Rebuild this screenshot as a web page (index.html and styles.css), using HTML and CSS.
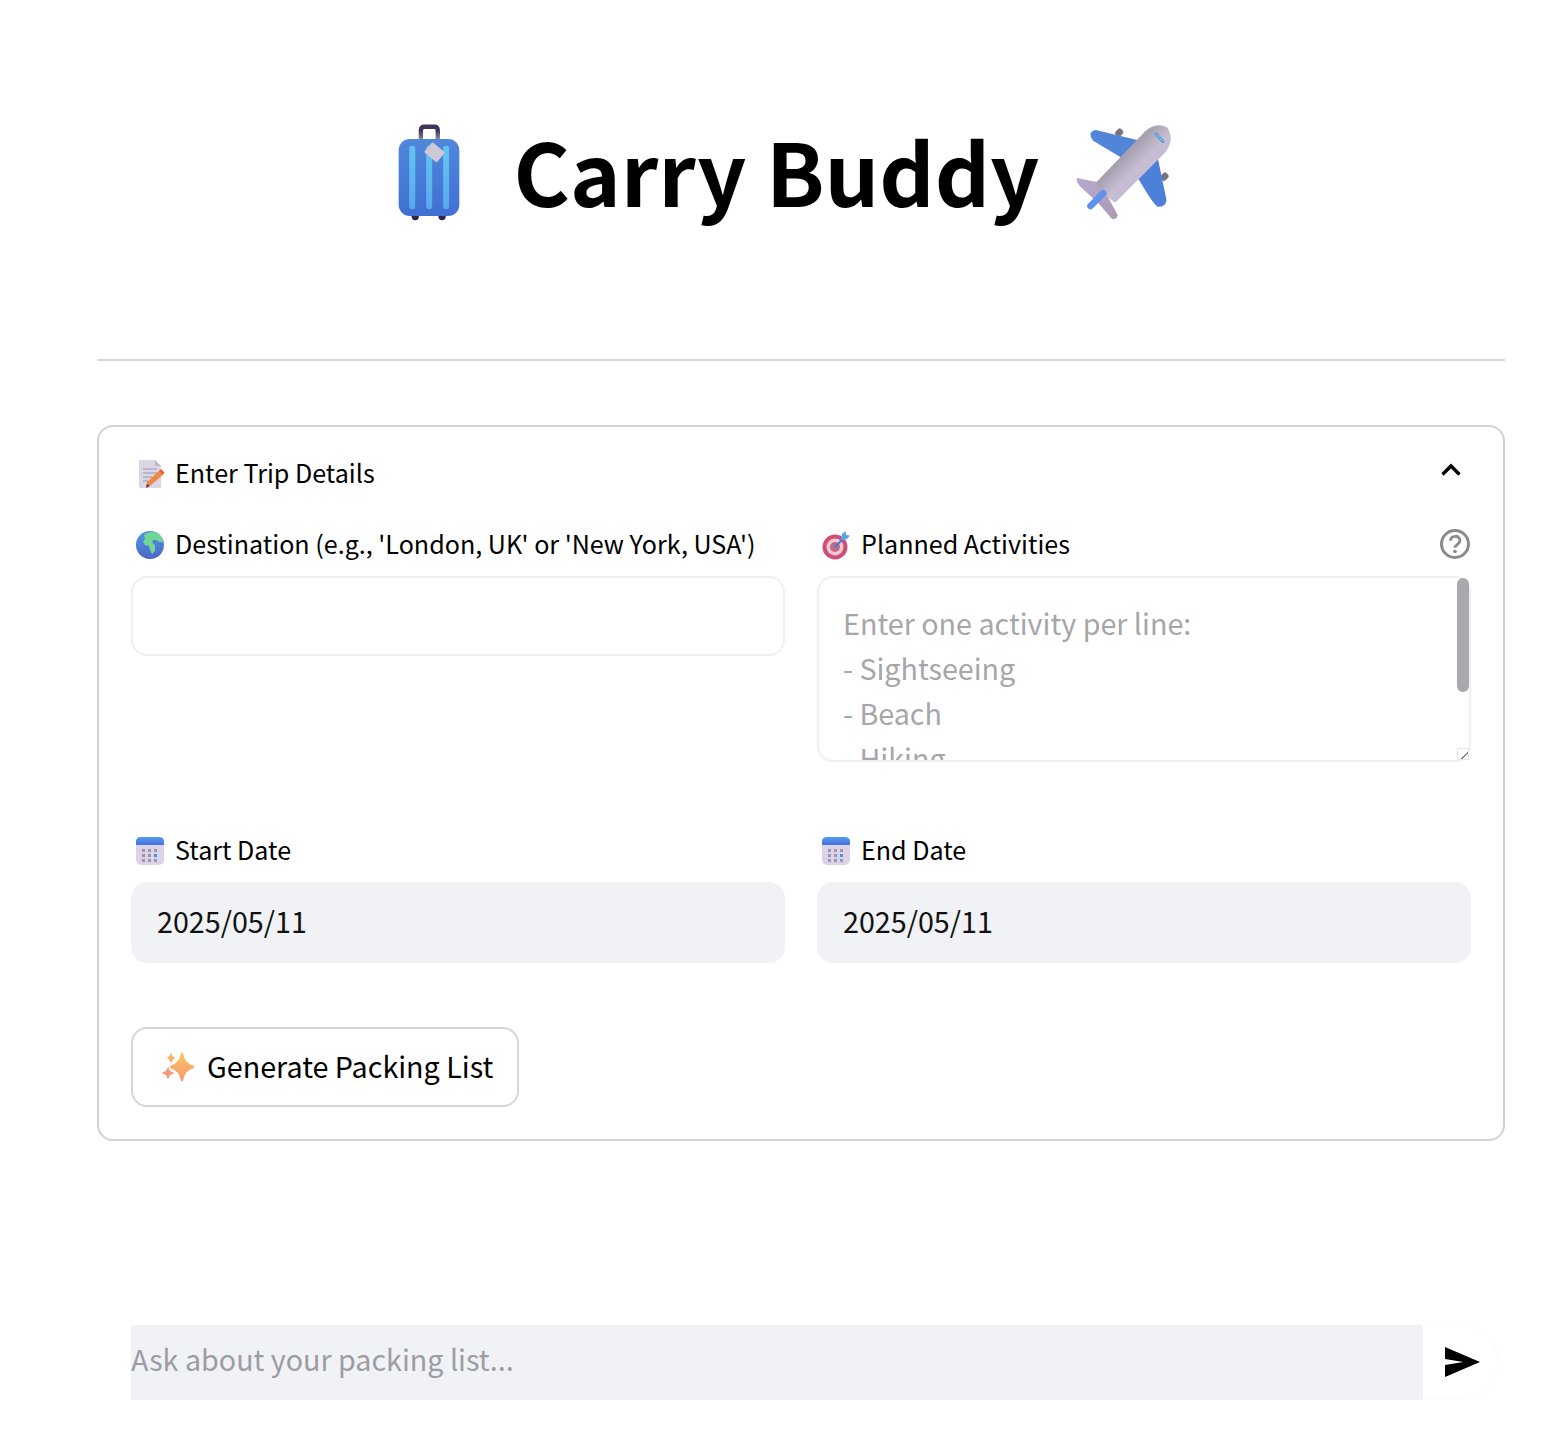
FILE: index.html
```html
<!DOCTYPE html>
<html lang="en">
<head>
	<meta charset="UTF-8">
	<title>Carry Buddy</title>
	<link rel="stylesheet" href="styles.css">
</head>
<body>
<div class="page">
	<h1 class="title">
		<!-- suitcase -->
		<svg class="title-icon case-icon" width="62" height="98" viewBox="55 40 187 295">
			<defs>
				<linearGradient id="caseBody" x1="0" y1="0" x2="0" y2="1">
					<stop offset="0" stop-color="#5088dc"/>
					<stop offset="1" stop-color="#3f70d2"/>
				</linearGradient>
				<linearGradient id="caseStripe" x1="0" y1="0" x2="0" y2="1">
					<stop offset="0" stop-color="#62c6f0"/>
					<stop offset="1" stop-color="#5aa8ee"/>
				</linearGradient>
				<linearGradient id="caseHandle" x1="0" y1="0" x2="0" y2="1">
					<stop offset="0.3" stop-color="#40345f"/>
					<stop offset="1" stop-color="#97939f"/>
				</linearGradient>
			</defs>
			<path d="M124 92V62q0-11 11-11h29q11 0 11 11v30" fill="none" stroke="url(#caseHandle)" stroke-width="13"/>
			<circle cx="107" cy="322" r="11" fill="#2f2748"/>
			<circle cx="188" cy="322" r="11" fill="#2f2748"/>
			<rect x="57" y="88" width="183" height="232" rx="34" fill="url(#caseBody)"/>
			<rect x="89" y="108" width="18" height="192" rx="9" fill="url(#caseStripe)"/>
			<rect x="140" y="108" width="18" height="192" rx="9" fill="url(#caseStripe)"/>
			<rect x="191" y="108" width="18" height="192" rx="9" fill="url(#caseStripe)"/>
			<rect x="140" y="108" width="50" height="40" rx="5" transform="rotate(40 165 128)" fill="#cfc8d8"/>
		</svg>
		<span class="title-text">Carry Buddy</span>
		<!-- plane -->
		<svg class="title-icon plane-icon" width="97" height="95" viewBox="50 45 290 285">
			<defs>
				<linearGradient id="planeBody" x1="0" y1="0" x2="1" y2="1">
					<stop offset="0.28" stop-color="#908c98"/>
					<stop offset="0.55" stop-color="#c8bed4"/>
					<stop offset="1" stop-color="#bdb1cc"/>
				</linearGradient>
				<linearGradient id="planeTail" x1="0" y1="0" x2="1" y2="1">
					<stop offset="0" stop-color="#b9a8d0"/>
					<stop offset="1" stop-color="#a99cb2"/>
				</linearGradient>
			</defs>
			<rect x="170" y="58" width="24" height="20" rx="7" transform="rotate(-45 182 68)" fill="#77747c"/>
			<rect x="306" y="190" width="24" height="20" rx="7" transform="rotate(-45 318 200)" fill="#77747c"/>
			<path d="M112 60L245 92 200 150 104 92Q84 66 112 60Z" fill="#5285da"/>
			<path d="M298 145L324 270Q322 292 298 290 286 286 236 200Z" fill="#4d80d8"/>
			<path d="M56 204L125 218 145 255 178 316Q170 334 158 324L122 282 70 234Q50 216 56 204Z" fill="url(#planeTail)"/>
			<path d="M112 218L258 66Q290 35 325 52 350 85 322 125L170 278 140 256Z" fill="url(#planeBody)"/>
			<path d="M96 288L134 250" stroke="#5f92ee" stroke-width="20" stroke-linecap="round"/>
			<path d="M293 72L313 95" stroke="#2f7ad8" stroke-width="8" stroke-linecap="round"/>
			<path d="M293 72L313 95" stroke="#6fd4f4" stroke-width="4" stroke-linecap="round"/>
		</svg>
	</h1>

	<hr class="divider">

	<section class="card">
		<div class="card-head">
			<span class="label">
				<svg class="icon" width="30" height="30" viewBox="0 0 30 30">
					<path d="M4 1H20L26 7V29H5Q4 29 4 28Z" fill="#dcd6e4"/>
					<path d="M20 1L26 7H20Z" fill="#bfb8ca"/>
					<path d="M8 10H22M8 14H22M8 18H17M8 22H13" stroke="#9a94a4" stroke-width="1.2"/>
					<path d="M11 28L12 23 25 11 29 15 16 26Z" fill="#ef8a45"/>
					<path d="M24 12L26 10 29.5 13.5 27.500 15.500Z" fill="#e8604a"/>
					<path d="M11 29L12 25 15 27Z" fill="#4b3a5c"/>
				</svg>
				<span class="label-text">Enter Trip Details</span>
			</span>
			<svg class="chevron" width="22" height="14" viewBox="0 0 22 14">
				<path d="M2.500 11.500L11 3l8.500 8.500" fill="none" stroke="#000" stroke-width="3.400"/>
			</svg>
		</div>

		<div class="fields">
			<div class="field">
				<label class="label">
					<svg class="icon" width="30" height="30" viewBox="0 0 30 30">
						<defs>
							<linearGradient id="globeSea" x1="0" y1="0" x2="0" y2="1">
								<stop offset="0" stop-color="#4f9be0"/>
								<stop offset="1" stop-color="#4a63c8"/>
							</linearGradient>
						</defs>
						<circle cx="15" cy="15" r="14" fill="url(#globeSea)"/>
						<path d="M9 5Q15 0 22 3 28 7 28 12L24 12 22 10 18 10 17 12 20 15 20 21 17 24 15 20 14 16 10 15 8 12 10 9Z" fill="#72d696"/>
					</svg>
					<span class="label-text">Destination (e.g., 'London, UK' or 'New York, USA')</span>
				</label>
				<input class="text-input" type="text">
			</div>

			<div class="field">
				<div class="label-row">
					<label class="label">
						<svg class="icon" width="30" height="30" viewBox="0 0 30 30">
							<circle cx="14" cy="17" r="12.500" fill="#cf4f74"/>
							<circle cx="14" cy="17" r="8.500" fill="#eec9d4"/>
							<circle cx="14" cy="17" r="5" fill="#d65f82"/>
							<circle cx="14" cy="17" r="2.200" fill="#8a8490"/>
							<path d="M14 17L24 7" stroke="#3f7fdc" stroke-width="2"/>
							<path d="M20 9L21 4 24.500 1 25 5 29 5.500 26 9 21 10.500Z" fill="#58a4ec"/>
						</svg>
						<span class="label-text">Planned Activities</span>
					</label>
					<svg class="help" width="32" height="32" viewBox="0 0 32 32">
						<circle cx="16" cy="16" r="13.500" fill="none" stroke="#8a8a8f" stroke-width="3"/>
						<path d="M11.500 12.800c0-6 9.500-6 9.500-.2 0 3.600-5 3.700-5 7.200" fill="none" stroke="#8a8a8f" stroke-width="2.800"/>
						<circle cx="16" cy="23.500" r="1.800" fill="#8a8a8f"/>
					</svg>
				</div>
				<div class="area-wrap">
					<textarea class="text-area" placeholder="Enter one activity per line:&#10;- Sightseeing&#10;- Beach&#10;- Hiking"></textarea>
					<span class="area-scroll"></span>
					<span class="area-resize"></span>
				</div>
			</div>

			<div class="field">
				<label class="label">
					<svg class="icon" width="30" height="30" viewBox="0 0 30 30">
						<defs>
							<linearGradient id="calTop" x1="0" y1="0" x2="0" y2="1">
								<stop offset="0" stop-color="#4f9cf0"/>
								<stop offset="1" stop-color="#4a6fe0"/>
							</linearGradient>
						</defs>
						<g id="calendar">
							<rect x="1" y="1" width="28" height="28" rx="5" fill="#dcd3ea"/>
							<path d="M1 9V6q0-5 5-5h18q5 0 5 5v3z" fill="url(#calTop)"/>
							<path d="M7 13h3v3H7zM13 13h3v3h-3zM7 18h3v3H7zM13 18h3v3h-3zM19 18h3v3h-3zM7 23h3v3H7zM13 23h3v3h-3zM19 23h3v3h-3zM19 13h3v3h-3z" fill="#9c98ac"/>
							<path d="M19 18h3v3h-3z" fill="#4a90e8"/>
						</g>
					</svg>
					<span class="label-text">Start Date</span>
				</label>
				<input class="date-input" type="text" value="2025/05/11">
			</div>

			<div class="field">
				<label class="label">
					<svg class="icon" width="30" height="30" viewBox="0 0 30 30"><use href="#calendar"/></svg>
					<span class="label-text">End Date</span>
				</label>
				<input class="date-input" type="text" value="2025/05/11">
			</div>
		</div>

		<button class="generate">
			<svg width="34" height="32" viewBox="0 0 34 32">
				<defs>
					<linearGradient id="spark" x1="0" y1="0" x2="0" y2="1">
						<stop offset="0" stop-color="#fbc55a"/>
						<stop offset="1" stop-color="#f59a78"/>
					</linearGradient>
				</defs>
				<path d="M21 3Q22.500 13 32 16 22.500 19 21 29 19.500 19 10 16 19.500 13 21 3Z" fill="url(#spark)" stroke="url(#spark)" stroke-width="2.500" stroke-linejoin="round"/>
				<path d="M10 3Q10.500 6 13 7 10.500 8 10 11 9.500 8 7 7 9.500 6 10 3Z" fill="#f7b566" stroke="#f7b566" stroke-width="1.500" stroke-linejoin="round"/>
				<path d="M7 17Q7.500 21 12 22 7.500 23 7 27 6.500 23 2 22 6.500 21 7 17Z" fill="#f59a78" stroke="#f59a78" stroke-width="1.500" stroke-linejoin="round"/>
			</svg>
			<span class="generate-text">Generate Packing List</span>
		</button>
	</section>

	<div class="chat">
		<input class="chat-input" type="text" placeholder="Ask about your packing list...">
		<svg class="send" width="35" height="30" viewBox="2 3 21 18" preserveAspectRatio="none">
			<path d="M2 21L23 12 2 3 2 10.200l11 1.800-11 1.800z"/>
		</svg>
	</div>
</div>
</body>
</html>
```

FILE: styles.css
```css
* {
	box-sizing: border-box;
}
body {
	margin: 0;
	background: #fff;
	color: #000;
	font-family: "Noto Sans CJK SC", "Noto Sans", sans-serif;
}
.page {
	padding: 97px 50px 0 97px;
}

/* title */
.title {
	display: flex;
	align-items: center;
	justify-content: center;
	height: 150px;
	margin: 0 32px 112px 0;
	font-size: 86px;
	font-weight: 700;
	line-height: 150px;
}
.title-icon {
	flex: none;
}
.title-text {
	margin-bottom: 4px;
}
.case-icon {
	margin-right: 54px;
}
.plane-icon {
	margin-left: 36px;
}
.divider {
	height: 2px;
	margin: 0 0 64px;
	border: 0;
	background: #d6d6d9;
}

/* card */
.card {
	height: 716px;
	padding: 0 32px;
	border: 2px solid #d2d2d6;
	border-radius: 16px;
}
.card-head {
	display: flex;
	align-items: center;
	justify-content: space-between;
	height: 93px;
	margin-bottom: 6px;
	padding: 0 9px 0 4px;
}
.chevron {
	margin-top: -8px;
}
.label {
	display: flex;
	align-items: center;
	gap: 10px;
	height: 38px;
	margin-bottom: 12px;
	padding-left: 4px;
	font-size: 25.1px;
	line-height: 38px;
}
.label-text {
	margin-bottom: 4px;
}
.card-head .label {
	margin-bottom: 0;
	padding-left: 0;
}
.icon {
	flex: none;
}
.label-row {
	display: flex;
	justify-content: space-between;
}
.help {
	margin-top: 2px;
}
.fields {
	display: grid;
	grid-template-columns: 1fr 1fr;
	gap: 70px 32px;
}
.text-input {
	display: block;
	width: 100%;
	height: 80px;
	border: 2px solid #f0f0f4;
	border-radius: 16px;
	outline: 0;
}
.area-wrap {
	position: relative;
	height: 186px;
}
.text-area {
	display: block;
	width: 100%;
	height: 100%;
	padding: 22px 24px 0;
	border: 2px solid #f0f0f4;
	border-radius: 16px;
	outline: 0;
	overflow: hidden;
	resize: none;
	font: 28.7px/45px "Noto Sans CJK SC", "Noto Sans", sans-serif;
}
.text-area::placeholder {
	color: #a6a6aa;
	opacity: 1;
}
.area-scroll {
	position: absolute;
	top: 2px;
	right: 2px;
	width: 12px;
	height: 114px;
	border-radius: 6px;
	background: #a9a9ad;
}
.area-resize {
	position: absolute;
	right: 2px;
	bottom: 2px;
	width: 12px;
	height: 12px;
	border: 1px solid #e4e4e4;
	background: linear-gradient(135deg, #fff 62%, #888 64%, #888 70%, #fff 72%);
}
.date-input {
	display: block;
	width: 100%;
	height: 81px;
	padding: 0 26px 4px;
	border: 0;
	border-radius: 16px;
	outline: 0;
	background: #f0f2f6;
	color: #111;
	font: 28.7px "Noto Sans CJK SC", "Noto Sans", sans-serif;
}

/* button */
.generate {
	display: flex;
	align-items: center;
	gap: 12px;
	height: 80px;
	margin-top: 64px;
	padding: 0 24px 0 28px;
	border: 2px solid #d6d6d9;
	border-radius: 16px;
	background: #fff;
	color: #000;
	font: 28.7px "Noto Sans CJK SC", "Noto Sans", sans-serif;
}
.generate-text {
	margin-bottom: 4px;
}

/* chat bar */
.chat {
	display: flex;
	align-items: center;
	width: 1368px;
	height: 76px;
	margin: 183px 0 0 34px;
	border: 2px solid #fcfcfd;
	border-left: 0;
	border-radius: 0 38px 38px 0;
}
.chat-input {
	width: 1292px;
	height: 75px;
	padding: 0 0 8px;
	border: 0;
	outline: 0;
	background: #f0f2f6;
	font: 28.7px "Noto Sans CJK SC", "Noto Sans", sans-serif;
}
.chat-input::placeholder {
	color: #9c9da3;
	opacity: 1;
}
.send {
	margin-left: 22px;
}
```
